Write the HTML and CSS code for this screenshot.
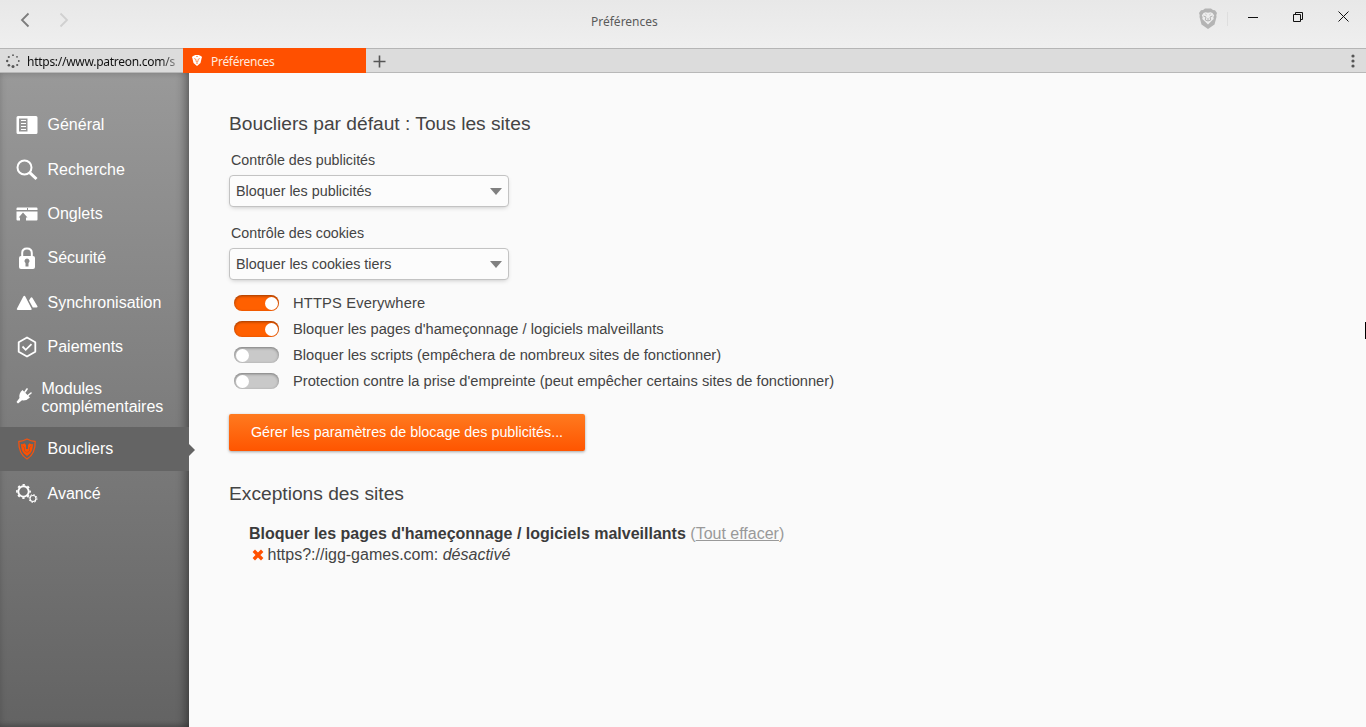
FILE: index.html
```html
<!DOCTYPE html>
<html lang="fr">
<head>
<meta charset="utf-8">
<title>Préférences</title>
<link rel="stylesheet" href="styles.css">
</head>
<body>
<div class="window">
  <header class="titlebar">
    <div class="nav">
      <svg class="back" width="10" height="16" viewBox="0 0 10 16"><path d="M8.500 1.500 2 8l6.500 6.500"/></svg>
      <svg class="forward" width="10" height="16" viewBox="0 0 10 16"><path d="M1.500 1.500 8 8l-6.500 6.500"/></svg>
    </div>
    <div class="title">Préférences</div>
    <div class="controls">
      <svg class="lion" width="20" height="22" viewBox="0 0 20 22"><path fill="#b4b4b4" d="M5 2 7 .5h6L15 2l2 .2L19 5l-.7 2 .2 2-2 7.500L10 21l-6.500-4.500L1.500 9l.2-2L1 5l2-2.800z"/><path fill="#ededed" d="m5.500 5 2-.8 2.500.6 2.500-.6 2 .8 1.700 2.500-.9 1.500.4 2-2.700 2.500-3 3-3-3L4.300 11l.4-2-.9-1.500z"/><path fill="none" stroke="#b4b4b4" d="m5.500 8 2.500 1-.7 3 2.700 1 2.700-1-.7-3 2.500-1M10 10v3M7.500 6l1 .8M12.500 6l-1 .8"/></svg>
      <span class="divider"></span>
      <svg class="minimize" width="10" height="16" viewBox="0 0 10 16"><path d="M0 8.500h10"/></svg>
      <svg class="restore" width="10" height="10" viewBox="0 0 10 10"><path d="M.5 2.500h7v7h-7zM2.500 2V.5h7v7H8"/></svg>
      <svg class="close" width="11" height="11" viewBox="0 0 11 11"><path d="m.5.5 10 10m0-10-10 10"/></svg>
    </div>
  </header>
  <div class="tabs">
    <div class="tab tab-loading">
      <svg width="14" height="14" viewBox="0 0 14 14" fill="#555"><circle cx="7" cy="1.200" r=".9"/><circle cx="11" cy="2.800" r=".9"/><circle cx="12.800" cy="7" r=".9"/><circle cx="11.200" cy="11" r="1.100"/><circle cx="7" cy="12.400" r="1.500"/><circle cx="2.900" cy="11.200" r="1.300"/><circle cx="1.200" cy="7" r="1.200"/><circle cx="2.800" cy="3" r="1.100"/></svg>
      <span class="tab-url">https://www.patreon.com/s</span>
    </div>
    <div class="tab tab-active">
      <svg width="10" height="11" viewBox="0 0 10 11"><path fill="#fff" d="M2 .8 3 0h4l1 .8L9.200 1l.8 1.500-.4.800L8.500 8 5 11 1.500 8 .4 3.300 0 2.500.8 1z"/><path fill="none" stroke="#ff7630" stroke-width=".8" d="M2.200 3.500 4 4.500v2l1 .5 1-.5v-2l1.800-1M4 8.500l1-.7 1 .7M4.200 1.500h1.600"/></svg>
      <span class="tab-title">Préférences</span>
    </div>
    <svg class="plus" width="13" height="13" viewBox="0 0 13 13"><path d="M6.500.5v12M.5 6.500h12"/></svg>
    <svg class="menu" width="4" height="14" viewBox="0 0 4 14" fill="#555"><circle cx="2" cy="2" r="1.600"/><circle cx="2" cy="7" r="1.600"/><circle cx="2" cy="12" r="1.600"/></svg>
  </div>
  <div class="main">
    <nav class="sidebar">
      <div class="item">
        <svg width="22" height="22" viewBox="0 0 22 22"><path fill="#fff" fill-rule="evenodd" d="M2 2h18q1.500 0 1.500 1.500v15Q21.500 20 20 20H2Q.5 20 .5 18.500v-15Q.5 2 2 2zm1 2.500v13h8.500v-13z"/><path stroke="#fff" d="M5 6.500h5M5 9.500h5M5 12.500h5M5 15.500h5"/></svg>
        <span>Général</span>
      </div>
      <div class="item">
        <svg width="22" height="22" viewBox="0 0 22 22" fill="none" stroke="#fff"><circle cx="8.500" cy="8.500" r="7" stroke-width="2"/><path stroke-width="3" d="m13.700 13.700 6.800 6.300"/></svg>
        <span>Recherche</span>
      </div>
      <div class="item">
        <svg width="22" height="22" viewBox="0 0 22 22"><path fill="#fff" d="M1.500 4.500h19q1 0 1 1V7H.5V5.500q0-1 1-1zM.5 8.500h21v8q0 1-1 1H10v-3h1.500L7 9.500l-4.300 5H4v3H1.500q-1 0-1-1z"/><path stroke="#8f8f8f" d="M11.500 5v2"/></svg>
        <span>Onglets</span>
      </div>
      <div class="item">
        <svg width="22" height="22" viewBox="0 0 22 22"><path fill="none" stroke="#fff" stroke-width="2" d="M6.200 10V6q0-4.500 4.800-4.500T15.800 6v4"/><path fill="#fff" fill-rule="evenodd" d="M5 9h12q2 0 2 2v9q0 2-2 2H5q-2 0-2-2v-9q0-2 2-2zm6 2.500a2.500 2.500 0 0 0-1.500 4.500v3.500h3V16A2.500 2.500 0 0 0 11 11.500z"/></svg>
        <span>Sécurité</span>
      </div>
      <div class="item">
        <svg width="22" height="22" viewBox="0 0 22 22"><path fill="#fff" d="M7.300 4.500q1-1.500 2 0l6.200 12q.8 1.500-1 1.500H2q-1.800 0-1-1.500zM14.500 6q1-1.500 2 0l4.800 8q.8 1.500-.8 1.500h-3.700L13 8.500z"/></svg>
        <span>Synchronisation</span>
      </div>
      <div class="item">
        <svg width="22" height="22" viewBox="0 0 22 22" fill="none" stroke="#fff" stroke-width="1.800"><path stroke-linejoin="round" d="m11 1.500 8.300 4.800v9.400L11 20.500l-8.300-4.800V6.300z"/><path d="m6.500 10.500 3.200 3.300 5.800-5.600"/></svg>
        <span>Paiements</span>
      </div>
      <div class="item item-tall">
        <svg class="plug" width="16" height="16" viewBox="0 0 16 16"><path fill="#fff" d="m6.500 2 7.500 7.500q-3.500 3.500-8 2.800L2 15.500.5 14l3-4Q2.500 5.500 6.500 2z"/><path stroke="#fff" stroke-width="1.600" stroke-linecap="round" d="m9 4 2-3M12 7.500 15 5"/></svg>
        <span>Modules complémentaires</span>
      </div>
      <div class="item item-active">
        <svg width="22" height="22" viewBox="0 0 22 22"><path fill="none" stroke="#f25310" stroke-width="1.300" stroke-linejoin="round" d="M2.800 3.500Q7 3.200 11 1q4 2.200 8.200 2.500Q19.500 16 11 21 2.500 16 2.800 3.500z"/><path fill="#ff5000" d="M5 6q2 .5 3.500-.7L10 7v4h2V7l1.500-1.700Q15 6.500 17 6q-.2 6.500-3 9.500L11 18l-3-2.500Q5.200 12.500 5 6z"/><path stroke="#8b5b45" stroke-width=".6" fill="none" d="m6.500 8 2 1.500V13l2.500 1.500 2.500-1.500V9.500l2-1.500"/></svg>
        <span>Boucliers</span>
      </div>
      <div class="item">
        <svg width="22" height="22" viewBox="0 0 22 22" fill="none" stroke="#fff"><circle cx="7.500" cy="8.500" r="5.200" stroke-width="1.900"/><circle cx="7.500" cy="8.500" r="6.600" stroke-width="1.600" stroke-dasharray="2.400 2.784" stroke-dashoffset="1.200"/><circle cx="17" cy="15.500" r="3" stroke-width="1.200"/><circle cx="17" cy="15.500" r="4" stroke-width="1" stroke-dasharray="1.400 1.742"/></svg>
        <span>Avancé</span>
      </div>
    </nav>
    <main class="content">
      <h1 class="heading">Boucliers par défaut : Tous les sites</h1>
      <div class="field">
        <div class="field-label">Contrôle des publicités</div>
        <div class="select"><span>Bloquer les publicités</span><i class="caret"></i></div>
      </div>
      <div class="field">
        <div class="field-label">Contrôle des cookies</div>
        <div class="select"><span>Bloquer les cookies tiers</span><i class="caret"></i></div>
      </div>
      <div class="switches">
        <div class="switch-row"><span class="switch switch-on"></span><span class="wide">HTTPS Everywhere</span></div>
        <div class="switch-row"><span class="switch switch-on"></span><span>Bloquer les pages d'hameçonnage / logiciels malveillants</span></div>
        <div class="switch-row"><span class="switch"></span><span>Bloquer les scripts (empêchera de nombreux sites de fonctionner)</span></div>
        <div class="switch-row"><span class="switch"></span><span>Protection contre la prise d'empreinte (peut empêcher certains sites de fonctionner)</span></div>
      </div>
      <div class="manage">Gérer les paramètres de blocage des publicités...</div>
      <h2 class="heading">Exceptions des sites</h2>
      <div class="exceptions">
        <div><b>Bloquer les pages d'hameçonnage / logiciels malveillants</b> <span class="clear">(<u>Tout effacer</u>)</span></div>
        <div class="site">
          <svg width="12" height="12" viewBox="0 0 12 12"><path stroke="#ff5000" stroke-width="3.400" d="m1.800 1.800 8.400 8.400m0-8.400-8.400 8.400"/></svg>
          <span>https?://igg-games.com: <em>désactivé</em></span>
        </div>
      </div>
    </main>
    <span class="edge-mark"></span>
  </div>
</div>
</body>
</html>
```
FILE: styles.css
```css
* { box-sizing: border-box; }

body {
  margin: 0;
  font-family: "Liberation Sans", Arial, sans-serif;
  font-size: 16px;
  color: #444;
}

svg { display: block; flex: none; }

.window {
  width: 1366px;
  height: 727px;
  display: flex;
  flex-direction: column;
  overflow: hidden;
  background: #fafafa;
}

/* Title bar */
.titlebar {
  height: 48px;
  display: flex;
  background: linear-gradient(#e8e8e8, #efefef);
  font: 12px "Noto Sans", sans-serif;
}
.nav { width: 591px; display: flex; gap: 29px; padding: 12px 0 0 20px; }
.nav path { fill: none; stroke: #7c7c7c; stroke-width: 1.8; }
.nav .forward path { stroke: #d0d0d0; }
.title { flex: 1; padding-top: 13px; color: #5a5a5a; }
.controls { display: flex; align-items: flex-start; padding: 8px 17px 0 0; }
.divider { width: 1px; height: 14px; margin: 4px 20px 0 9px; background: #dedede; }
.minimize path, .restore path, .close path { fill: none; stroke: #111; }
.minimize { margin: 1px 35px 0 0; }
.restore { margin: 4px 35px 0 0; }
.close { margin-top: 3px; }

/* Tab strip */
.tabs {
  height: 25px;
  display: flex;
  align-items: center;
  border-top: 1px solid #b5b5b5;
  border-bottom: 1px solid #b8b8b8;
  background: #dcdcdc;
  font: 12px "Noto Sans", sans-serif;
}
.tab { height: 25px; display: flex; align-items: center; }
.tab-loading { width: 183px; padding: 0 7px 0 6px; gap: 7px; color: #111; }
.tab-url {
  padding-top: 1px;
  letter-spacing: -.27px;
  white-space: nowrap;
  overflow: hidden;
  -webkit-mask-image: linear-gradient(to right, #000 134px, transparent 158px);
  mask-image: linear-gradient(to right, #000 134px, transparent 158px);
}
.tab-active { width: 183px; padding-left: 9px; gap: 9px; background: #ff5000; color: #ffeade; }
.tab-title { padding-top: 1px; letter-spacing: -.3px; }
.plus { margin: 1px 0 0 7px; fill: none; stroke: #555; stroke-width: 1.6; }
.menu { margin: 1px 11px 0 auto; }

/* Sidebar */
.main { flex: 1; display: flex; position: relative; }
.sidebar {
  width: 189px;
  padding-top: 30px;
  background: linear-gradient(#999, #636363);
  box-shadow: inset -8px 0 10px -4px rgba(0, 0, 0, .35), inset 2px 0 6px rgba(0, 0, 0, .08), inset 0 -4px 6px -3px rgba(0, 0, 0, .2);
  color: #fff;
}
.item {
  height: 44.35px;
  display: flex;
  align-items: center;
  gap: 9.5px;
  padding-left: 16px;
  line-height: 18px;
}
.item-tall { height: 58px; padding-right: 20px; }
.plug { margin-bottom: 4px; }
.item-active { position: relative; background: #646464; }
.item-active::after {
  content: "";
  position: absolute;
  left: 189px;
  top: 17px;
  border: 6px solid transparent;
  border-right: 0;
  border-left-color: #646464;
}

/* Preferences */
.content { flex: 1; padding: 40px 0 0 40px; }
.heading { margin: 0; font-size: 19.2px; font-weight: 400; line-height: 22px; color: #444; }
.field { width: 280px; margin-top: 17px; font-size: 14.35px; }
.field-label { height: 23px; padding-left: 2px; line-height: 17px; font-size: 14.25px; }
.field + .field { margin-top: 18px; }
.select {
  height: 32px;
  display: flex;
  align-items: center;
  justify-content: space-between;
  padding: 0 6px;
  border: 1px solid #c3c3c3;
  border-radius: 4px;
  background: #fcfcfc;
  box-shadow: 0 2px 5px -2px rgba(0, 0, 0, .25);
}
.caret { border: 6px solid transparent; border-top: 7px solid #808080; border-bottom: 0; }
.switches { margin: 10px 0 20px 5px; font-size: 14.68px; }
.switch-row { height: 26px; display: flex; align-items: center; gap: 14px; white-space: nowrap; }
.wide { letter-spacing: .17px; }
.switch {
  width: 45px;
  height: 16px;
  display: flex;
  border-radius: 8px;
  background: #c9c9c9;
  box-shadow: inset 0 1px 3px rgba(0, 0, 0, .4);
}
.switch::before {
  content: "";
  width: 13px;
  height: 13px;
  margin: 1.5px;
  border-radius: 50%;
  background: #fff;
}
.switch-on { justify-content: flex-end; background: #ff6000; }
.manage {
  width: 356px;
  height: 37px;
  margin-bottom: 32px;
  border-radius: 2px;
  background: linear-gradient(#ff7a1f, #ff5500);
  box-shadow: 0 1px 3px rgba(0, 0, 0, .35);
  font-size: 14.34px;
  line-height: 37px;
  text-align: center;
  color: #fff;
}
.exceptions { margin-top: 18px; padding-left: 20px; line-height: 21px; }
.exceptions b { color: #3b3b3b; }
.exceptions .clear { color: #999; }
.site { display: flex; align-items: center; gap: 3.5px; padding-left: 3px; }
.edge-mark { position: absolute; right: 0; top: 249px; width: 1px; height: 17px; background: #000; }
```
